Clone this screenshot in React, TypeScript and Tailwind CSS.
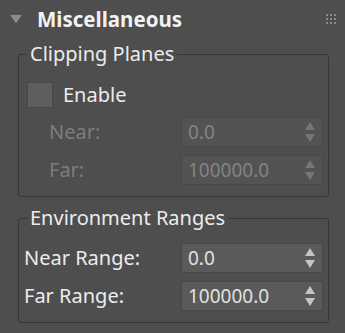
import React from "react";

function Spinner({ disabled }: { disabled?: boolean }) {
  const c = disabled ? "#767676" : "#c4c4c4";
  return (
    <svg width="10" height="20" viewBox="0 0 10 20" className="shrink-0">
      <polygon points="5,0 10,8 0,8" fill={c} />
      <polygon points="0,12 10,12 5,20" fill={c} />
    </svg>
  );
}

function NumberField({ value, disabled }: { value: string; disabled?: boolean }) {
  return (
    <div
      className={
        "flex h-[30px] w-[142px] items-center justify-between border pl-[6px] pr-[7px] text-[19px] " +
        (disabled
          ? "border-[#484848] bg-[#535353] text-[#838383]"
          : "border-[#474747] bg-[#5a5a5a] text-[#e0e0e0]")
      }
    >
      <span>{value}</span>
      <Spinner disabled={disabled} />
    </div>
  );
}

function Row({ label, value, disabled, indent }: { label: string; value: string; disabled?: boolean; indent?: boolean }) {
  return (
    <div className="flex items-center justify-between">
      <span className={(indent ? "pl-[22px] " : "") + (disabled ? "text-[#7d7d7d]" : "text-[#ececec]")}>{label}</span>
      <NumberField value={value} disabled={disabled} />
    </div>
  );
}

export default function App() {
  return (
    <div className="h-[333px] w-[345px] overflow-hidden bg-[#4e4e4e] font-['Noto_Sans',sans-serif] text-[20px] leading-[22px] text-[#ececec]">
      {/* rollout header */}
      <div className="flex h-[36px] items-center pl-[10px] pr-[9px] pt-[1px]">
        <svg width="12" height="8" viewBox="0 0 12 8">
          <polygon points="0,0 12,0 6,8" fill="#8c8c8c" />
        </svg>
        <span className="ml-[15px] text-[20.5px] font-bold text-[#f2f2f2]">Miscellaneous</span>
        <div className="ml-auto grid grid-cols-3 gap-[2px]">
          {Array.from({ length: 9 }).map((_, i) => (
            <div key={i} className="h-[2px] w-[2px] bg-[#8a8a8a]" />
          ))}
        </div>
      </div>

      {/* Clipping Planes */}
      <fieldset className="ml-[18px] mr-[16px] mt-[7px] rounded-[3px] border border-[#363636] pb-[11px] pl-[8px] pr-[5px] pt-[17px]">
        <legend className="ml-0 px-[3px] text-[#ececec]">Clipping Planes</legend>
        <div className="flex items-center gap-[10px]">
          <div className="h-[26px] w-[26px] border border-[#474747] bg-[#5e5e5e]" />
          <span>Enable</span>
        </div>
        <div className="mt-[9px] flex flex-col gap-[8px]">
          <Row label="Near:" value="0.0" disabled indent />
          <Row label="Far:" value="100000.0" disabled indent />
        </div>
      </fieldset>

      {/* Environment Ranges */}
      <fieldset className="ml-[18px] mr-[16px] mt-[10px] rounded-[3px] border border-[#363636] pb-[11px] pl-[5px] pr-[5px] pt-[14px]">
        <legend className="ml-[3px] px-[3px] text-[#ececec]">Environment Ranges</legend>
        <div className="flex flex-col gap-[8px]">
          <Row label="Near Range:" value="0.0" />
          <Row label="Far Range:" value="100000.0" />
        </div>
      </fieldset>
    </div>
  );
}
